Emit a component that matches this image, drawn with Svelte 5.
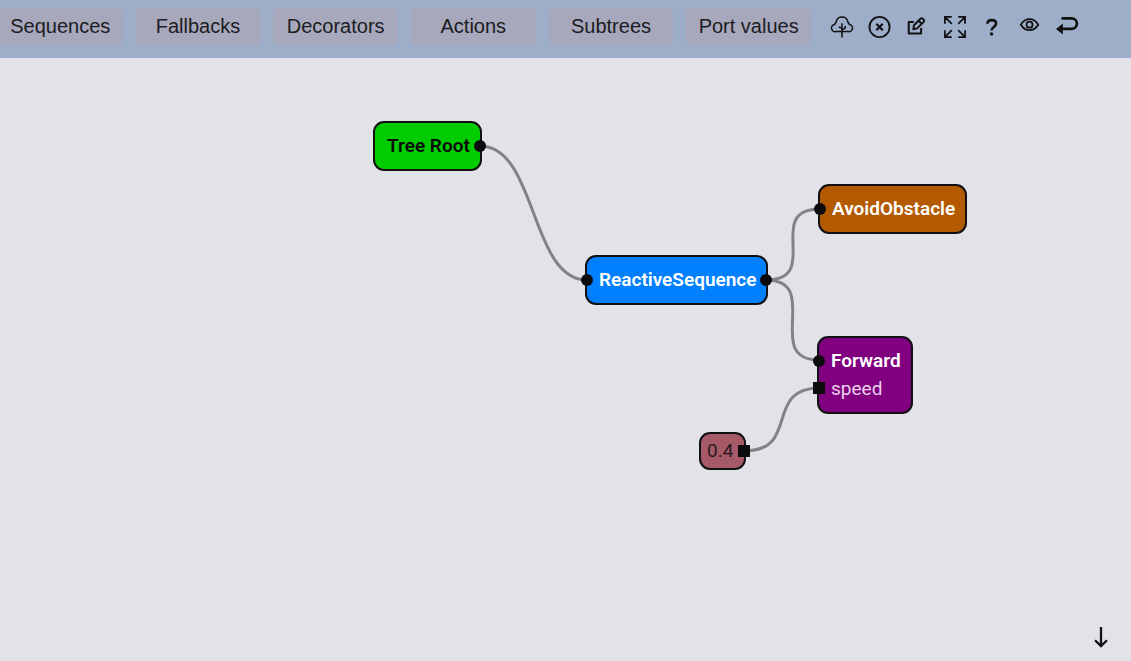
<script>
  const menus = ['Sequences', 'Fallbacks', 'Decorators', 'Actions', 'Subtrees', 'Port values'];

  const nodes = [
    { title: 'Tree Root', kind: 'root', x: 373, y: 121, ports: [{ side: 'right', shape: 'circle' }] },
    { title: 'ReactiveSequence', kind: 'sequence', x: 585, y: 255, ports: [{ side: 'left', shape: 'circle' }, { side: 'right', shape: 'circle' }] },
    { title: 'AvoidObstacle', kind: 'subtree', x: 818, y: 184, ports: [{ side: 'left', shape: 'circle' }] },
    { title: 'Forward', kind: 'action', x: 817, y: 336, field: 'speed', ports: [{ side: 'left', shape: 'circle' }, { side: 'left', shape: 'square', second: true }] },
    { value: '0.4', kind: 'value', x: 699, y: 432, ports: [{ side: 'right', shape: 'square' }] }
  ];

  const links = [
    [480, 146, 587, 280],
    [766, 280, 820, 209],
    [766, 280, 819, 360],
    [744, 451, 820, 388]
  ];

  const bend = 57;
  const curve = ([x1, y1, x2, y2]) => `M${x1} ${y1}C${x1 + bend} ${y1} ${x2 - bend} ${y2} ${x2} ${y2}`;
</script>

<div class="editor">
  <header>
    <nav>
      {#each menus as menu}
        <button class="menu">{menu}</button>
      {/each}
    </nav>
    <div class="tools">
      <button aria-label="Tree">
        <svg viewBox="0 0 24 24" stroke-width="1.700"><path d="M12 23.500V8M12 15.500l3.500-2.500V11M12 13.500l-3.500-1.500M7.500 17H5.500A4 4 0 0 1 3.600 9.200Q5 8.500 5.500 6.500C6.300 3 9 1 12 1s5.700 2 6.500 5.500Q19 8.500 20.400 9.200A4 4 0 0 1 18.500 17H7.500"/></svg>
      </button>
      <button aria-label="Clear">
        <svg viewBox="0 0 24 24" stroke-width="2"><circle cx="11.500" cy="12" r="11"/><path d="M8 8.500l7 7M15 8.500l-7 7" stroke-width="2.400"/></svg>
      </button>
      <button aria-label="Edit">
        <svg viewBox="0 0 24 24" stroke-width="2.200" stroke-linejoin="round"><path d="M8.500 6.500H3V19H16.500V13M8 14.500l.7-4.500 6.800-6.800q1.500-1.500 3 0l.5.5q1.500 1.500 0 3l-6.800 6.800zM13.800 5.200l3.400 3.400"/></svg>
      </button>
      <button aria-label="Fit to view">
        <svg viewBox="0 0 24 24" stroke-width="1.900"><path d="M1 8.500V1H8.500M1 1L8.500 8.500M15.500 1H23V8.500M23 1L15.500 8.500M1 15.500V23H8.500M1 23L8.500 15.500M15.500 23H23V15.500M23 23L15.500 15.500"/></svg>
      </button>
      <button aria-label="Help">
        <svg viewBox="0 0 24 24" stroke-width="2.800"><path d="M7 8.500C7 5.500 9 4.500 11.800 4.500s4.700 1.500 4.700 3.800c0 3.700-5 3.700-5 7.500"/><circle cx="11.500" cy="19.500" r="1.900" fill="currentColor" stroke="none"/></svg>
      </button>
      <button aria-label="Show">
        <svg viewBox="0 0 24 24" stroke-width="1.900"><path d="M2 9.500C4.500 5.500 7.500 3.500 11.500 3.500s7 2 9.500 6c-2.500 4-5.500 6-9.500 6s-7-2-9.500-6z"/><circle cx="11.500" cy="9.500" r="3.300"/></svg>
      </button>
      <button aria-label="Back">
        <svg viewBox="0 0 24 24" stroke-width="3"><path d="M6 2.500h11a5.800 5.800 0 0 1 0 11.600H6"/><path d="M0 14.100l7.500-6v12z" fill="currentColor" stroke="none"/></svg>
      </button>
    </div>
  </header>

  <main>
    <svg class="links">
      {#each links as link}
        <path d={curve(link)} />
      {/each}
    </svg>
    {#each nodes as node}
      <article class="node {node.kind}" style="left: {node.x}px; top: {node.y}px">
        {#if node.title}<strong>{node.title}</strong>{/if}
        {#if node.field}<span>{node.field}</span>{/if}
        {#if node.value}<span>{node.value}</span>{/if}
        {#each node.ports as port}
          <i class="port {port.side} {port.shape}" class:second={port.second}></i>
        {/each}
      </article>
    {/each}
  </main>

  <button class="down" aria-label="Scroll down">
    <svg viewBox="0 0 24 24" stroke-width="2.500"><path d="M12 1v21M5.500 15.500l6.500 6.500 6.500-6.500"/></svg>
  </button>
</div>

<style>
  :global(body) {
    background: #e2e3e8;
  }

  .editor {
    position: relative;
    min-height: 100vh;
    overflow: hidden;
    display: flex;
    flex-direction: column;
    color: #111114;
    font-family: Roboto, sans-serif;
  }

  button {
    padding: 0;
    border: 0;
    background: none;
    color: inherit;
    cursor: pointer;
  }

  svg {
    display: block;
    fill: none;
    stroke: currentColor;
    overflow: visible;
  }

  header {
    display: flex;
    align-items: flex-start;
    gap: 20px;
    padding: 8px 0 13px;
    background: #9faec8;
  }

  nav {
    flex: 0 0 813px;
    display: grid;
    grid-template-columns: repeat(6, 1fr);
    gap: 13px;
    margin-left: -2px;
  }

  .menu {
    height: 37px;
    border-radius: 5px;
    background: #a7a8bb;
    color: #1c1c22;
    font: 20px/37px "Liberation Sans", sans-serif;
    white-space: nowrap;
  }

  .tools {
    flex: 0 0 247px;
    display: flex;
    justify-content: space-between;
    padding-top: 8px;
  }

  .tools svg {
    width: 22px;
    height: 22px;
  }

  main {
    flex: 1;
  }

  .links {
    position: absolute;
    inset: 0;
    width: 100%;
    height: 100%;
    pointer-events: none;
    stroke: #838383;
    stroke-width: 3;
  }

  .node {
    position: absolute;
    display: flex;
    flex-direction: column;
    box-sizing: border-box;
    padding: 9px 10px 9px 12px;
    border: 2px solid #111114;
    border-radius: 11px;
    color: #fff;
    font-size: 19px;
    line-height: 28px;
    white-space: nowrap;
  }

  .node strong {
    font-weight: 600;
  }

  .root {
    background: #00cc00;
    color: #0b0b0b;
  }

  .sequence {
    background: #007fff;
  }

  .subtree {
    background: #b35900;
  }

  .action {
    background: #800080;
  }

  .action span {
    color: #ecd0ec;
  }

  .value {
    padding: 3px 11px 3px 6px;
    background: #a65966;
    color: #26191f;
  }

  .port {
    position: absolute;
    top: 17px;
    width: 12px;
    height: 12px;
    background: #0c0c0e;
  }

  .circle {
    border-radius: 50%;
  }

  .left {
    left: -6px;
  }

  .right {
    right: -6px;
  }

  .second {
    top: 44px;
  }

  .value .port {
    top: 11px;
  }

  .down {
    position: absolute;
    right: 19px;
    bottom: 13px;
  }

  .down svg {
    width: 22px;
    height: 22px;
  }
</style>
